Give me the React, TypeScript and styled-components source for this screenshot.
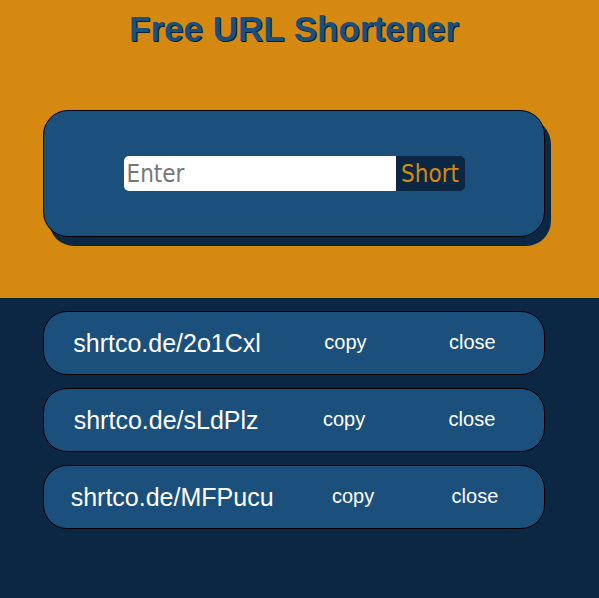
import { FC } from 'react';
import styled, { createGlobalStyle } from 'styled-components';

const colors = {
  orange: '#d68910',
  blue: '#1b4f7c',
  navy: '#0c2744',
  white: '#ffffff',
};

const GlobalStyle = createGlobalStyle`
  html, body {
    margin: 0;
    padding: 0;
    background: ${colors.navy};
    font-family: "Liberation Sans", Arial, sans-serif;
  }
  * {
    box-sizing: border-box;
  }
`;

const Hero = styled.section`
  background: ${colors.orange};
  height: 298px;
  padding: 9px 0 0 43px;
`;

const Column = styled.div`
  width: 502px;
  display: flex;
  flex-direction: column;
  align-items: center;
`;

const Title = styled.h1`
  margin: 0;
  font-size: 35px;
  line-height: 40px;
  font-weight: 700;
  color: ${colors.blue};
  text-shadow: 1px 1px 0 #0a2038;
`;

const FormCard = styled.div`
  width: 100%;
  height: 127px;
  margin-top: 61px;
  background: ${colors.blue};
  border: 1px solid #000;
  border-radius: 25px;
  box-shadow: 6px 9px 0 ${colors.navy};
  display: flex;
  align-items: center;
  justify-content: center;
`;

const InputGroup = styled.form`
  display: flex;
  height: 35px;
`;

const UrlInput = styled.input`
  width: 272px;
  height: 100%;
  border: none;
  outline: none;
  border-radius: 5px 0 0 5px;
  padding: 1px 3px 0;
  font-family: "DejaVu Sans Condensed", "DejaVu Sans", sans-serif;
  font-size: 24px;
  color: #333;
  background: ${colors.white};

  &::placeholder {
    color: #777;
  }
`;

const ShortButton = styled.button`
  width: 69px;
  height: 100%;
  border: none;
  border-radius: 0 5px 5px 0;
  background: ${colors.navy};
  color: ${colors.orange};
  font-family: "DejaVu Sans Condensed", "DejaVu Sans", sans-serif;
  font-size: 24px;
  padding: 0;
  cursor: pointer;
`;

const Results = styled.section`
  padding: 13px 0 0 43px;
  display: flex;
  flex-direction: column;
  gap: 13px;
  min-height: 300px;
`;

const LinkRow = styled.div`
  width: 502px;
  height: 64px;
  padding: 0 7px;
  background: ${colors.blue};
  border: 1px solid #000;
  border-radius: 24px;
  display: flex;
  align-items: center;
  justify-content: space-around;
`;

const ShortUrl = styled.span`
  color: ${colors.white};
  font-size: 25px;
`;

const RowAction = styled.button`
  background: none;
  border: none;
  color: ${colors.white};
  font-family: "Liberation Sans", Arial, sans-serif;
  font-size: 20px;
  padding: 0 19px 2px;
  cursor: pointer;
`;

const links = ['shrtco.de/2o1Cxl', 'shrtco.de/sLdPlz', 'shrtco.de/MFPucu'];

const App: FC = () => {
  return (
    <>
      <GlobalStyle />
      <Hero>
        <Column>
          <Title>Free URL Shortener</Title>
          <FormCard>
            <InputGroup onSubmit={(e) => e.preventDefault()}>
              <UrlInput placeholder="Enter" />
              <ShortButton type="submit">Short</ShortButton>
            </InputGroup>
          </FormCard>
        </Column>
      </Hero>
      <Results>
        {links.map((link) => (
          <LinkRow key={link}>
            <ShortUrl>{link}</ShortUrl>
            <RowAction>copy</RowAction>
            <RowAction>close</RowAction>
          </LinkRow>
        ))}
      </Results>
    </>
  );
};

export default App;
